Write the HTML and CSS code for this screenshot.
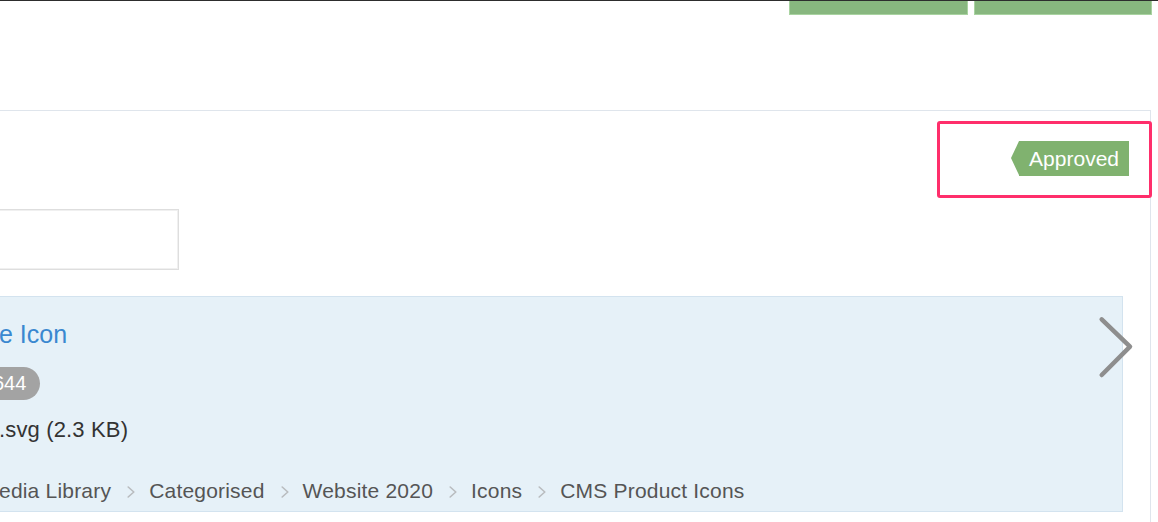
FILE: index.html
```html
<!DOCTYPE html>
<html lang="en">
<head>
<meta charset="utf-8">
<title>Media item</title>
<link rel="stylesheet" href="styles.css">
</head>
<body>
<header class="topbar">
  <div class="actions">
    <button class="btn" type="button"></button>
    <button class="btn" type="button"></button>
  </div>
</header>

<section class="panel">
  <div class="panel-head">
    <span class="tag">Approved</span>
  </div>
  <div class="annotation"></div>

  <div class="field"></div>

  <div class="card">
    <div class="card-body">
      <div class="card-title">e Icon</div>
      <div class="card-badge-row"><span class="badge">644</span></div>
      <div class="card-file">.svg (2.3 KB)</div>
      <nav class="crumbs">
        <span class="crumb crumb-first">edia Library</span>
        <svg class="sep" viewBox="0 0 8 12" width="8" height="12"><path d="M1.2 1 L6.8 6 L1.2 11" fill="none" stroke="#b9bcbf" stroke-width="1.6" stroke-linecap="round" stroke-linejoin="round"/></svg>
        <span class="crumb">Categorised</span>
        <svg class="sep" viewBox="0 0 8 12" width="8" height="12"><path d="M1.2 1 L6.8 6 L1.2 11" fill="none" stroke="#b9bcbf" stroke-width="1.6" stroke-linecap="round" stroke-linejoin="round"/></svg>
        <span class="crumb">Website 2020</span>
        <svg class="sep" viewBox="0 0 8 12" width="8" height="12"><path d="M1.2 1 L6.8 6 L1.2 11" fill="none" stroke="#b9bcbf" stroke-width="1.6" stroke-linecap="round" stroke-linejoin="round"/></svg>
        <span class="crumb">Icons</span>
        <svg class="sep" viewBox="0 0 8 12" width="8" height="12"><path d="M1.2 1 L6.8 6 L1.2 11" fill="none" stroke="#b9bcbf" stroke-width="1.6" stroke-linecap="round" stroke-linejoin="round"/></svg>
        <span class="crumb">CMS Product Icons</span>
      </nav>
    </div>
    <svg class="chevron" viewBox="0 0 36 64" width="36" height="64"><path d="M3.7 3.3 L32 30.7 L3.7 59" fill="none" stroke="#8e8e8e" stroke-width="4.5" stroke-linecap="round" stroke-linejoin="round"/></svg>
  </div>
</section>
</body>
</html>
```

FILE: styles.css
```css
html, body {
  margin: 0;
  padding: 0;
  background: #ffffff;
  overflow: hidden;
}

body {
  width: 1158px;
  height: 522px;
  font-family: "Liberation Sans", Arial, Helvetica, sans-serif;
  color: #333333;
}

.topbar {
  border-top: 1px solid #2d2d2d;
  height: 110px;
  box-sizing: border-box;
}

.actions {
  display: flex;
  justify-content: flex-end;
  gap: 6px;
  padding-right: 6px;
}

.btn {
  display: block;
  height: 14px;
  margin: 0;
  padding: 0;
  background: #88b77f;
  border: 1px solid #a9d3a1;
  border-top: 0;
}

.btn:first-child { width: 179px; }
.btn:last-child { width: 178px; }

.panel {
  position: relative;
  margin-left: -20px;
  margin-right: 7px;
  border: 1px solid #dfe5ec;
  border-bottom: 0;
  padding: 30px 21px 40px 0;
  height: 420px;
  box-sizing: border-box;
}

.panel-head {
  display: flex;
  justify-content: flex-end;
  height: 35px;
}

.tag {
  position: relative;
  display: block;
  height: 35px;
  box-sizing: border-box;
  padding: 2px 10px 2px 10px;
  line-height: 31px;
  font-size: 21px;
  color: #ffffff;
  background: #80b26f;
}

.tag::before {
  content: "";
  position: absolute;
  left: -8px;
  top: 0;
  border-right: 8px solid #80b26f;
  border-top: 17.5px solid transparent;
  border-bottom: 17.5px solid transparent;
}

.annotation {
  position: absolute;
  top: 10px;
  right: -2px;
  width: 215px;
  height: 77px;
  box-sizing: border-box;
  border: 3px solid #ff2e6b;
  border-radius: 3px;
}

.field {
  margin-top: 33px;
  width: 198px;
  height: 61px;
  box-sizing: border-box;
  border: 1px solid #dedede;
  box-shadow: inset 0 0 0 1px #f0f0f0;
  background: #ffffff;
}

.card {
  display: flex;
  margin-top: 26px;
  margin-right: 6px;
  height: 216px;
  box-sizing: border-box;
  background: #e6f1f8;
  border: 1px solid #d3e3ef;
  padding: 23px 0 0 18px;
}

.card-body {
  flex: 1;
  min-width: 0;
}

.card-title {
  margin-left: -1px;
  font-size: 25px;
  line-height: 28px;
  color: #3a88d0;
}

.card-badge-row {
  margin-top: 19px;
  display: flex;
}

.badge {
  display: block;
  margin-left: -20px;
  padding: 6px 14px 6px 13px;
  font-size: 20px;
  line-height: 21px;
  color: #ffffff;
  background: #a3a3a3;
  border-radius: 17px;
}

.card-file {
  margin-top: 18px;
  margin-left: -1px;
  font-size: 22px;
  line-height: 24px;
  letter-spacing: 0.15px;
  color: #333333;
}

.crumbs {
  margin-top: 37px;
  display: flex;
  align-items: baseline;
  font-size: 21px;
  line-height: 24px;
  letter-spacing: 0.2px;
  color: #555555;
  white-space: nowrap;
}

.crumb-first {
  margin-left: -1px;
}

.sep {
  flex: none;
  margin: 0 14px 0 16px;
  align-self: center;
  position: relative;
  top: 1px;
}

.chevron {
  flex: none;
  margin-top: -4px;
  margin-right: -12px;
}
```
